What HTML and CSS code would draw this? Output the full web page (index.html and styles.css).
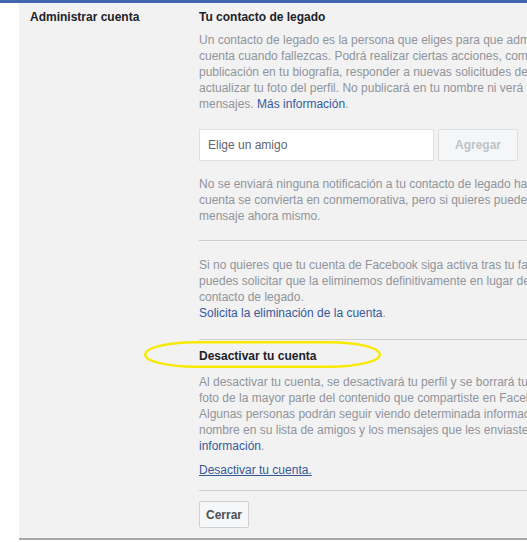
FILE: index.html
```html
<!DOCTYPE html>
<html lang="es">
<head>
<meta charset="utf-8">
<title>Administrar cuenta</title>
<link rel="stylesheet" href="styles.css">
</head>
<body>
<div class="topbar"></div>
<div class="panel">
  <div class="label">Administrar cuenta</div>
  <div class="content">
    <section class="legacy">
      <h3 class="title">Tu contacto de legado</h3>
      <p class="text intro">Un contacto de legado es la persona que eliges para que administre tu<br>cuenta cuando fallezcas. Podrá realizar ciertas acciones, como fijar una<br>publicación en tu biografía, responder a nuevas solicitudes de amistad y<br>actualizar tu foto del perfil. No publicará en tu nombre ni verá tus<br>mensajes. <a class="link" href="#">Más información</a>.</p>
      <div class="picker">
        <input class="friend" type="text" placeholder="Elige un amigo">
        <button class="btn-add" type="button" disabled>Agregar</button>
      </div>
      <p class="text note">No se enviará ninguna notificación a tu contacto de legado hasta que tu<br>cuenta se convierta en conmemorativa, pero si quieres puedes enviarle un<br>mensaje ahora mismo.</p>
    </section>
    <hr class="sep sep-a">
    <section class="delete">
      <p class="text">Si no quieres que tu cuenta de Facebook siga activa tras tu fallecimiento,<br>puedes solicitar que la eliminemos definitivamente en lugar de designar un<br>contacto de legado.<br><a class="link" href="#">Solicita la eliminación de la cuenta</a>.</p>
    </section>
    <hr class="sep sep-b">
    <section class="deactivate">
      <h3 class="title heading-ring">Desactivar tu cuenta<svg class="ring" width="237" height="27" viewBox="0 0 237 27" aria-hidden="true"><rect x="1.2" y="1.2" width="234.6" height="24.6" rx="50" ry="12.3" fill="none" stroke="#f7ea00" stroke-width="2.4"/></svg></h3>
      <p class="text deact-text">Al desactivar tu cuenta, se desactivará tu perfil y se borrará tu nombre y tu<br>foto de la mayor parte del contenido que compartiste en Facebook.<br>Algunas personas podrán seguir viendo determinada información, como tu<br>nombre en su lista de amigos y los mensajes que les enviaste. <a class="link" href="#">Más</a><br><a class="link" href="#">información</a>.</p>
      <p class="action"><a class="link underline" href="#">Desactivar tu cuenta.</a></p>
    </section>
    <hr class="sep sep-c">
    <button class="btn-close" type="button">Cerrar</button>
  </div>
</div>
</body>
</html>
```

FILE: styles.css
```css
html, body {
  margin: 0;
  padding: 0;
  overflow: hidden;
  background: #ffffff;
}

body {
  font-family: "Liberation Sans", Arial, Helvetica, sans-serif;
  font-size: 12px;
  line-height: 16px;
  color: #1d2129;
}

.topbar {
  height: 3px;
  background: #4267b2;
}

.panel {
  box-sizing: border-box;
  width: 820px;
  margin-left: 19px;
  background: #f2f2f2;
  display: grid;
  grid-template-columns: 169px 1fr;
  padding: 6px 0 10px 11px;
  border-bottom: 2px solid #a9a9a9;
}

.label {
  font-weight: bold;
}

.content {
  min-width: 0;
}

.title {
  margin: 0;
  font-size: 12px;
  line-height: 16px;
  font-weight: bold;
  color: #1d2129;
}

.text {
  margin: 0;
  color: #90949c;
  white-space: nowrap;
}

.link {
  color: #365899;
  text-decoration: none;
}

.underline {
  text-decoration: underline;
}

.intro {
  margin-top: 7px;
}

.picker {
  display: flex;
  gap: 4px;
  margin-top: 17px;
}

.friend {
  box-sizing: border-box;
  width: 235px;
  height: 32px;
  margin: 0;
  padding: 0 8px;
  border: 1px solid #dddfe2;
  border-radius: 0;
  background: #ffffff;
  font-family: inherit;
  font-size: 12px;
  color: #1d2129;
  outline: none;
}

.friend::placeholder {
  color: #62666d;
  opacity: 1;
}

.btn-add {
  box-sizing: border-box;
  width: 80px;
  height: 32px;
  margin: 0;
  padding: 0;
  border: 1px solid #dddfe2;
  border-radius: 2px;
  background: #f5f6f7;
  color: #bec3c9;
  font-family: inherit;
  font-size: 12px;
  font-weight: bold;
}

.note {
  margin-top: 15px;
}

.sep {
  height: 0;
  margin: 0;
  border: 0;
  border-top: 1px solid #cfcfcf;
}

.sep-a {
  margin-top: 16px;
}

.delete {
  margin-top: 16px;
}

.sep-b {
  margin-top: 18px;
}

.heading-ring {
  position: relative;
  margin-top: 8px;
}

.ring {
  position: absolute;
  left: -55px;
  top: -7px;
  pointer-events: none;
}

.deact-text {
  margin-top: 10px;
}

.action {
  margin: 8px 0 0;
}

.sep-c {
  margin-top: 12px;
}

.btn-close {
  box-sizing: border-box;
  display: block;
  height: 27px;
  margin: 10px 0 0;
  padding: 0 6px;
  border: 1px solid #ced0d4;
  border-radius: 2px;
  background: #f6f7f9;
  color: #4b4f56;
  font-family: inherit;
  font-size: 12px;
  font-weight: bold;
}
```
